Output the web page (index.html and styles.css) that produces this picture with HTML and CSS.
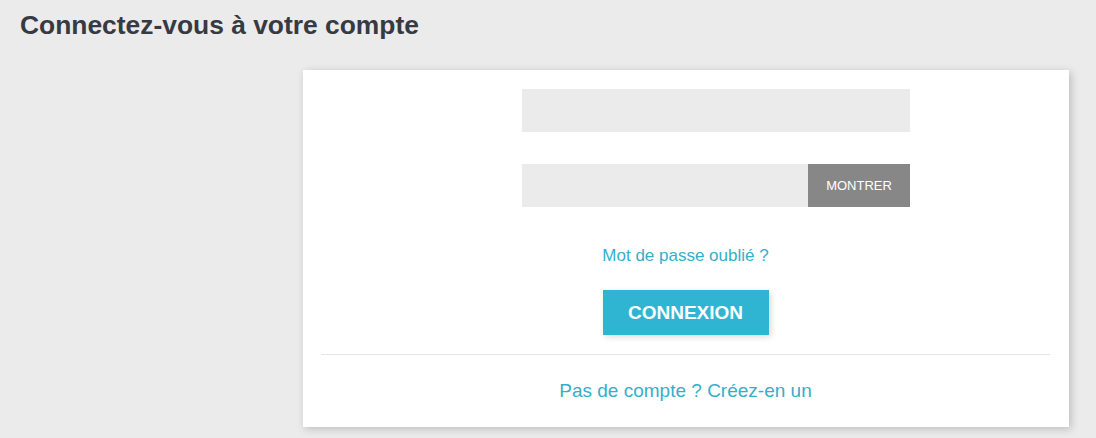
FILE: index.html
```html
<!DOCTYPE html>
<html lang="fr">
<head>
<meta charset="utf-8">
<title>Connexion</title>
<link rel="stylesheet" href="styles.css">
</head>
<body>
<header class="page-header">
  <h1>Connectez-vous à votre compte</h1>
</header>
<main class="layout">
  <section class="card">
    <form class="login-form">
      <div class="field">
        <input class="input" type="email" name="email">
      </div>
      <div class="field">
        <div class="input-group">
          <input class="input" type="password" name="password">
          <button type="button" class="show-btn">Montrer</button>
        </div>
      </div>
      <div class="forgot">
        <a href="#">Mot de passe oublié ?</a>
      </div>
      <div class="submit-row">
        <button type="submit" class="submit-btn">Connexion</button>
      </div>
    </form>
    <hr class="divider">
    <div class="no-account">
      <a href="#">Pas de compte ? Créez-en un</a>
    </div>
  </section>
</main>
</body>
</html>
```

FILE: styles.css
```css
* { box-sizing: border-box; }
html, body {
  margin: 0;
  padding: 0;
}
body {
  background: #ebebeb;
  font-family: "Liberation Sans", Arial, sans-serif;
  color: #363a41;
  width: 1096px;
  height: 438px;
  overflow: hidden;
}
.page-header {
  padding: 10px 20px 0 20px;
}
.page-header h1 {
  margin: 0;
  font-size: 26.4px;
  line-height: 30px;
  font-weight: 700;
  color: #363a41;
}
.layout {
  display: flex;
  padding: 30px 27px 0 303px;
}
.card {
  width: 766px;
  background: #fff;
  box-shadow: 2px 2px 8px 0 rgba(0, 0, 0, 0.2);
  padding: 19px 19px 24px 18px;
}
.login-form {
  display: flex;
  flex-direction: column;
}
.field {
  padding-left: 201px;
  margin-bottom: 32px;
}
.input {
  display: block;
  width: 388px;
  height: 43px;
  border: none;
  background: #ebebeb;
  padding: 0 12px;
  font: inherit;
  outline: none;
}
.input-group {
  display: flex;
  width: 388px;
}
.input-group .input {
  flex: 1;
  width: auto;
}
.show-btn {
  width: 102px;
  height: 43px;
  border: none;
  background: #878787;
  color: #fff;
  font-family: "Liberation Sans", Arial, sans-serif;
  font-size: 13px;
  text-transform: uppercase;
  padding: 0;
}
.forgot {
  text-align: center;
  margin-top: 6px;
  line-height: 22px;
}
.forgot a, .no-account a {
  color: #34afca;
  text-decoration: none;
}
.forgot a {
  font-size: 17px;
}
.submit-row {
  display: flex;
  justify-content: center;
  margin-top: 23px;
}
.submit-btn {
  width: 166px;
  height: 45px;
  border: none;
  background: #2fb5d2;
  color: #fff;
  font-family: "Liberation Sans", Arial, sans-serif;
  font-weight: 700;
  font-size: 19px;
  text-transform: uppercase;
  box-shadow: 2px 2px 6px 0 rgba(0, 0, 0, 0.15);
  padding: 0;
}
.divider {
  border: none;
  border-top: 1px solid #e5e5e5;
  margin: 19px 0 0 0;
}
.no-account {
  text-align: center;
  margin-top: 24px;
  font-size: 19px;
  line-height: 24px;
}
```
